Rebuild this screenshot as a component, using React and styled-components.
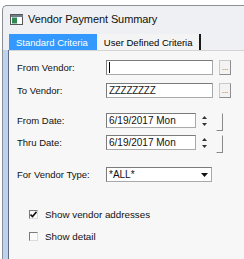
import React from "react";
import styled, { createGlobalStyle } from "styled-components";

const Global = createGlobalStyle`
  html, body {
    margin: 0;
    padding: 0;
    background: #ffffff;
    overflow: hidden;
  }
  body {
    font-family: "Liberation Sans", Arial, sans-serif;
  }
`;

const Window = styled.div`
  margin: 5px 0 0 2px;
  height: 254px;
  background: #eef0f3;
  border-top: 1px solid #8c8f94;
  border-left: 1px solid #8c8f94;
  border-radius: 5px 0 0 0;
  display: flex;
  flex-direction: column;
`;

const TitleBar = styled.div`
  display: flex;
  align-items: center;
  gap: 5px;
  height: 26px;
  padding-left: 7px;
  font-family: "Liberation Sans", Arial, sans-serif;
  font-size: 11px;
  letter-spacing: -0.1px;
  color: #111;
`;

const Tabs = styled.div`
  display: flex;
  align-items: stretch;
  height: 16px;
  padding-left: 6px;
  margin-top: 2px;
`;

const Tab = styled.div`
  display: flex;
  align-items: center;
  white-space: nowrap;
  padding: 0 ${(p) => (p.active ? 7 : 6)}px 0 7px;
  font-size: 9.5px;
  background: ${(p) => (p.active ? "#3399ff" : "#f4f4f4")};
  color: ${(p) => (p.active ? "#fff" : "#000")};
  border-right: 2px solid ${(p) => (p.active ? "#3399ff" : "#1a1a1a")};
`;

const Body = styled.div`
  flex: 1;
  display: flex;
`;

const Frame = styled.div`
  width: 5px;
  background: #bcd2ee;
  border-right: 1px solid #5f6b7a;
`;

const Panel = styled.div`
  flex: 1;
  background: #f7f7f7;
  border-top: 1px solid #d4d4d4;
  padding: 9px 0 0 8px;
  font-size: 9.5px;
  color: #111;
`;

const Row = styled.div`
  display: flex;
  align-items: center;
  height: 15px;
  margin-top: ${(p) => p.gap || 0}px;
`;

const Label = styled.div`
  width: 89px;
  flex: none;
`;

const Field = styled.div`
  position: relative;
  box-sizing: border-box;
  width: ${(p) => p.w}px;
  height: 15px;
  background: #fff;
  border: 1px solid #7b7b7b;
  border-right-color: #a9a9a9;
  border-bottom-color: #a9a9a9;
  display: flex;
  align-items: center;
  padding-left: 2px;
  font-size: 10px;
  white-space: nowrap;
  overflow: hidden;
`;

const Caret = styled.span`
  width: 1px;
  height: 11px;
  background: #000;
`;

const Zeds = styled.span`
  font-size: 10px;
  letter-spacing: -0.3px;
  line-height: 10px;
  margin-top: 1px;
  color: #222;
`;

const Ellipsis = styled.div`
  box-sizing: border-box;
  width: 12px;
  height: 15px;
  margin-left: 6px;
  background: #f3f3f3;
  border: 1px solid #c9c9c9;
  border-right-color: #8e8e8e;
  border-bottom-color: #8e8e8e;
  font-size: 8px;
  color: #555;
  display: flex;
  align-items: flex-end;
  justify-content: center;
  line-height: 8px;
  padding-bottom: 2px;
`;

const Spin = styled.svg`
  margin-left: 5px;
  flex: none;
`;

const Bracket = styled.div`
  box-sizing: border-box;
  width: 7px;
  height: 18px;
  margin-left: 8px;
  margin-top: 3px;
  border: 1px solid #f8f8f8;
  border-right-color: #8a8a8a;
  border-bottom-color: #8a8a8a;
`;

const DropBtn = styled.div`
  position: absolute;
  right: 0;
  top: 0;
  bottom: 0;
  width: 14px;
  display: flex;
  align-items: center;
  justify-content: center;
  background: #fff;
`;

const Check = styled.label`
  display: flex;
  align-items: center;
  gap: 7px;
  margin: ${(p) => p.gap}px 0 0 12px;
  height: 12px;
  font-size: 9.8px;
`;

const Box = styled.span`
  box-sizing: border-box;
  width: 9px;
  height: 9px;
  background: #fafafa;
  border: 1px solid #7a7a7a;
  border-right-color: #dcdcdc;
  border-bottom-color: #dcdcdc;
  display: flex;
  align-items: center;
  justify-content: center;
`;

const AppIcon = () => (
  <svg width="13" height="11" viewBox="0 0 13 11">
    <rect x="0.5" y="0.5" width="12" height="10" fill="#fff" stroke="#555" />
    <rect x="1" y="1" width="12" height="2" fill="#6d7c8e" />
    <rect x="2" y="3.5" width="5" height="6" fill="#2f8a52" />
  </svg>
);

const Spinner = () => (
  <Spin width="7" height="12" viewBox="0 0 7 12">
    <path d="M3.5 1 L6 4 L1 4 Z" fill="#333" />
    <path d="M1 8 L6 8 L3.5 11 Z" fill="#333" />
  </Spin>
);

const DateRow = ({ label, value, gap }) => (
  <Row gap={gap}>
    <Label>{label}</Label>
    <Field w={90}>{value}</Field>
    <Spinner />
    <Bracket />
  </Row>
);

const CheckRow = ({ checked, label, gap }) => (
  <Check gap={gap}>
    <Box>
      {checked && (
        <svg width="7" height="7" viewBox="0 0 7 7">
          <path d="M0.5 3.5 L2.5 5.5 L6.5 0.8" fill="none" stroke="#111" strokeWidth="1.6" />
        </svg>
      )}
    </Box>
    {label}
  </Check>
);

export default function App() {
  return (
    <>
      <Global />
      <Window>
        <TitleBar>
          <AppIcon />
          Vendor Payment Summary
        </TitleBar>
        <Tabs>
          <Tab active>Standard Criteria</Tab>
          <Tab>User Defined Criteria</Tab>
        </Tabs>
        <Body>
          <Frame />
          <Panel>
            <Row>
              <Label>From Vendor:</Label>
              <Field w={107}>
                <Caret />
              </Field>
              <Ellipsis>...</Ellipsis>
            </Row>
            <Row gap={8}>
              <Label>To Vendor:</Label>
              <Field w={107}>
                <Zeds>ZZZZZZZZ</Zeds>
              </Field>
              <Ellipsis>...</Ellipsis>
            </Row>
            <DateRow label="From Date:" value="6/19/2017 Mon" gap={15} />
            <DateRow label="Thru Date:" value="6/19/2017 Mon" gap={7} />
            <Row gap={17}>
              <Label>For Vendor Type:</Label>
              <Field w={106}>
                *ALL*
                <DropBtn>
                  <svg width="7" height="4" viewBox="0 0 7 4">
                    <path d="M0 0 L7 0 L3.5 4 Z" fill="#111" />
                  </svg>
                </DropBtn>
              </Field>
            </Row>
            <CheckRow checked label="Show vendor addresses" gap={26} />
            <CheckRow label="Show detail" gap={10} />
          </Panel>
        </Body>
      </Window>
    </>
  );
}
